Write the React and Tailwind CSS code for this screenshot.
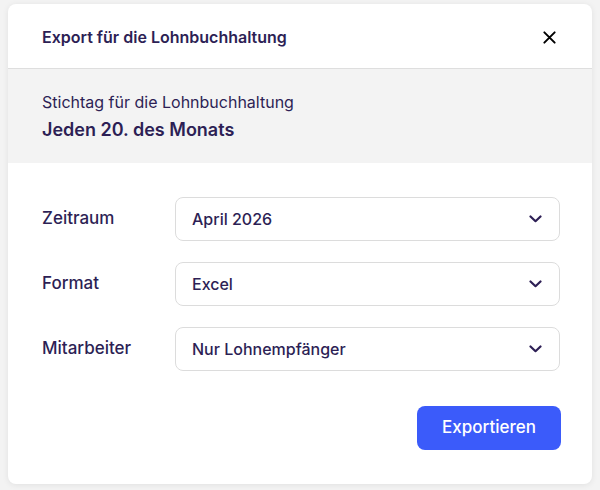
import React, { useState } from 'react';

const fields = [
  { id: 'period', label: 'Zeitraum', value: 'April 2026' },
  { id: 'format', label: 'Format', value: 'Excel' },
  { id: 'staff', label: 'Mitarbeiter', value: 'Nur Lohnempfänger' },
];

function Chevron() {
  return (
    <svg width="13" height="8" viewBox="0 0 13 8" fill="none" className="text-[#2d1f55]">
      <path d="M1.5 1.5L6.5 6.2l5-4.7" stroke="currentColor" strokeWidth="2.2" strokeLinecap="round" strokeLinejoin="round" />
    </svg>
  );
}

function SelectField({ value }) {
  return (
    <button className="flex h-[44px] w-[385px] items-center justify-between rounded-lg border border-[#dcdcdc] bg-white pl-[16px] pr-[17px] text-left text-[16px] font-medium text-[#2d1f55]">
      <span>{value}</span>
      <Chevron />
    </button>
  );
}

export default function App() {
  const [open, setOpen] = useState(true);

  return (
    <div className="h-[490px] w-[600px] bg-[#f3f3f3] px-[8px] pt-[4px] font-['Inter',sans-serif] text-[#2d1f55]">
      {open && (
        <div className="h-[480px] w-[584px] overflow-hidden rounded-lg bg-white shadow-[0_1px_6px_rgba(0,0,0,0.08)]">
          <div className="flex h-[65px] items-center justify-between border-b border-[#dedede] pl-[34px] pr-[35px] pt-[2px]">
            <h2 className="text-[16px] font-semibold">Export für die Lohnbuchhaltung</h2>
            <button onClick={() => setOpen(false)} className="text-black">
              <svg width="15" height="15" viewBox="0 0 16 16" fill="none">
                <path d="M2.5 2.5l11 11M13.5 2.5l-11 11" stroke="currentColor" strokeWidth="2.1" strokeLinecap="round" />
              </svg>
            </button>
          </div>

          <div className="flex h-[94px] flex-col justify-center bg-[#f3f3f3] pl-[34px]">
            <p className="text-[16px] leading-[22px]">Stichtag für die Lohnbuchhaltung</p>
            <p className="mt-[5px] text-[18px] font-semibold leading-[24px]">Jeden 20. des Monats</p>
          </div>

          <div className="flex flex-col gap-[21px] pl-[34px] pr-[32px] pt-[34px]">
            {fields.map((f) => (
              <div key={f.id} className="flex items-center">
                <label className="w-[133px] text-[17px] font-medium">{f.label}</label>
                <SelectField value={f.value} />
              </div>
            ))}
          </div>

          <div className="flex justify-end pr-[31px] pt-[35px]">
            <button className="h-[44px] w-[144px] rounded-lg bg-[#3b5bfa] text-[17px] font-medium text-white">
              Exportieren
            </button>
          </div>
        </div>
      )}
    </div>
  );
}
